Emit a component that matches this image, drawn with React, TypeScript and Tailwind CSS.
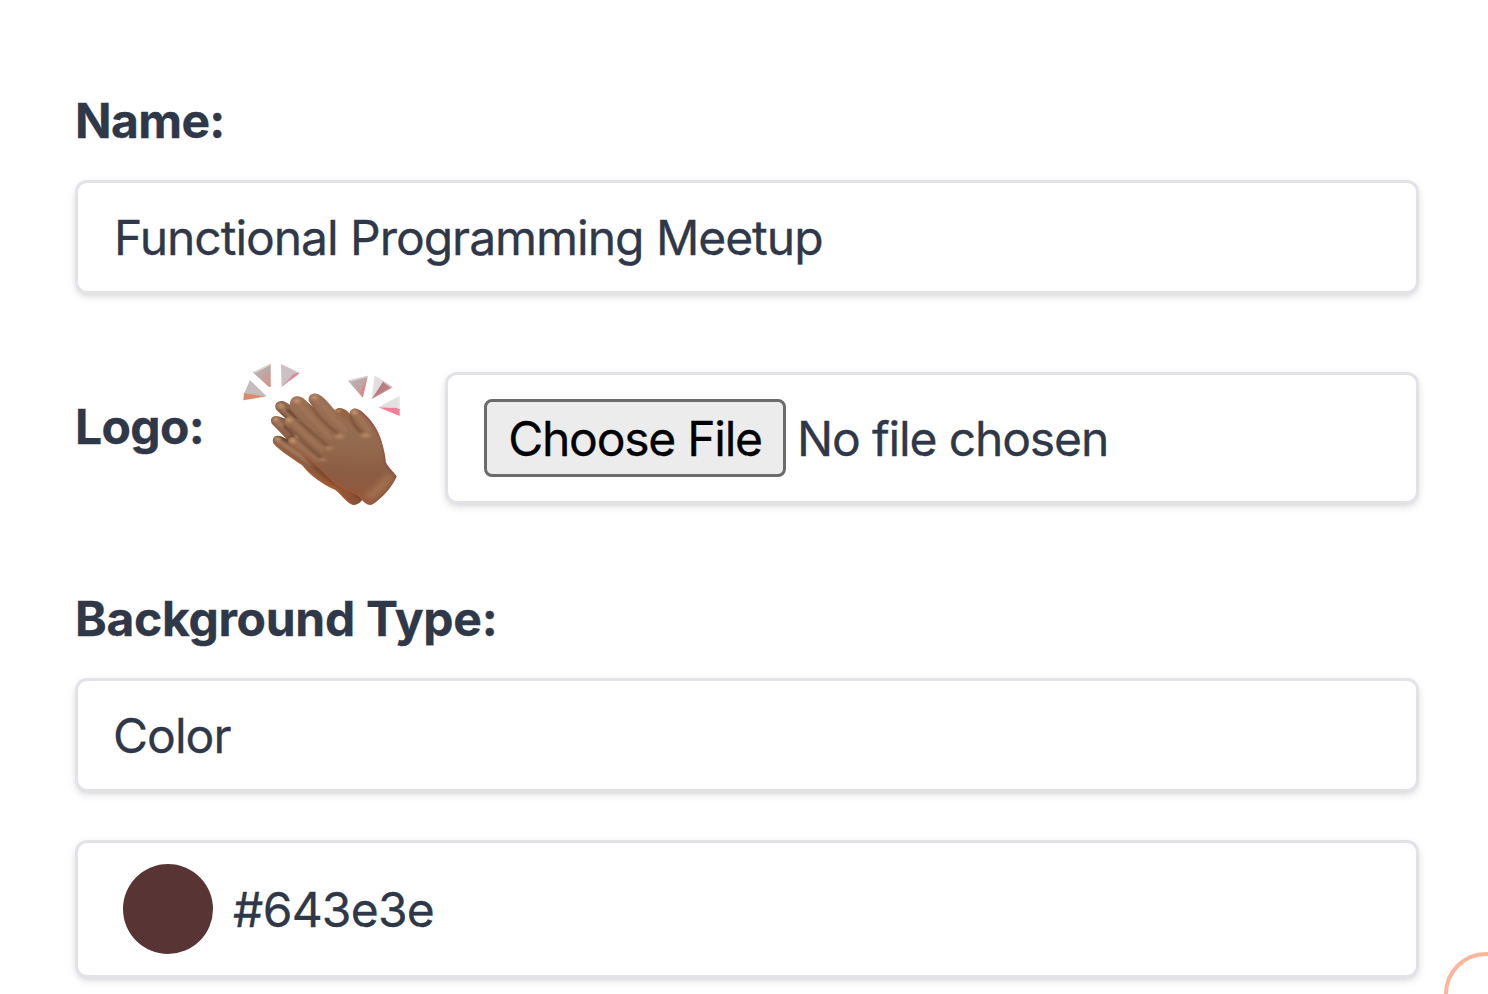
import type { ReactNode } from "react";

const field =
  "rounded-[12px] border-[3px] border-[#e2e2e8] bg-white shadow-[0_3px_9px_rgba(0,0,0,0.1),0_3px_6px_-3px_rgba(0,0,0,0.1)]";

function Label({ className = "", children }: { className?: string; children: ReactNode }) {
  return (
    <label className={`block whitespace-nowrap text-[48px] leading-[72px] font-bold ${className}`}>
      {children}
    </label>
  );
}

function ClappingHands() {
  return (
    <svg className="h-[170px] w-[190px] shrink-0" viewBox="0 0 570 510" fill="none">
      <defs>
        <linearGradient id="back" x1="140" y1="200" x2="360" y2="460" gradientUnits="userSpaceOnUse">
          <stop stopColor="#8f654c" />
          <stop offset=".5" stopColor="#8c5c40" />
          <stop offset=".8" stopColor="#9c5934" />
          <stop offset="1" stopColor="#8a5136" />
        </linearGradient>
        <linearGradient id="palm" x1="300" y1="160" x2="290" y2="420" gradientUnits="userSpaceOnUse">
          <stop stopColor="#9a6f54" />
          <stop offset=".5" stopColor="#93694d" />
          <stop offset=".8" stopColor="#8b5d43" />
          <stop offset="1" stopColor="#915a3f" />
        </linearGradient>
        <radialGradient id="tip">
          <stop stopColor="#c8976f" />
          <stop offset="1" stopColor="#b08060" stopOpacity="0" />
        </radialGradient>
        <linearGradient id="grayPink" x1="0" y1="0" x2="1" y2="1">
          <stop stopColor="#c2b8ba" />
          <stop offset=".5" stopColor="#bda8a7" />
          <stop offset="1" stopColor="#dd8d80" />
        </linearGradient>
        <linearGradient id="rose" x1="0" y1="0" x2="1" y2="1">
          <stop stopColor="#a57478" />
          <stop offset="1" stopColor="#d28b88" />
        </linearGradient>
        <filter id="soft" x="0" y="0" width="570" height="510" filterUnits="userSpaceOnUse">
          <feGaussianBlur stdDeviation="3" />
        </filter>
        <filter id="softer" x="0" y="0" width="570" height="510" filterUnits="userSpaceOnUse">
          <feGaussianBlur stdDeviation="9" />
        </filter>
        <path
          id="far-shape"
          d="M140 181C128 162 144 149 162 154L250 205L300 330L394 440L396 451C389 461 377 467 367 464C347 455 333 432 315 419C277 403 238 374 216 345C193 329 149 302 131 281C123 263 136 253 153 259L170 267L126 222C116 203 132 193 149 200L170 208Z"
        />
        <path
          id="near-shape"
          d="M236 153C233 135 249 126 265 133C286 144 300 165 317 183L361 220C362 212 358 203 359 193C358 176 375 170 389 180C421 202 445 240 455 275C463 302 466 319 467 335C474 353 489 363 500 379C487 410 460 442 428 463C422 466 413 465 407 460C395 452 388 436 370 430C334 418 302 393 273 358C250 336 198 306 178 280C168 264 182 256 197 264L232 283L168 226C157 211 169 193 187 201L215 219L190 190C184 180 179 172 180 160C182 139 203 133 220 145L250 172Z"
        />
        <clipPath id="far">
          <use href="#far-shape" />
        </clipPath>
        <clipPath id="near">
          <use href="#near-shape" />
        </clipPath>
      </defs>

      {/* Sparks around the hands */}
      <path d="M60 90L110 139L41 133Z" fill="#c3bdbf" />
      <path d="M42 130L109 139L40 151Z" fill="#d98c6c" />
      <path d="M68 67L122 41V111H117Z" fill="url(#grayPink)" />
      <path d="M68 67L122 41L121 46L76 68Z" fill="#ddd8da" />
      <path d="M153 42L207 68L155 111Z" fill="#cbc0c2" />
      <path d="M207 68L155 111L190 72Z" fill="#dc8e97" />
      <path d="M207 66L205 73L178 94L192 75Z" fill="#f27f9c" />
      <path d="M354 92L413 77L398 143Z" fill="url(#grayPink)" />
      <path d="M354 92L413 77L411 82L363 94Z" fill="#ddd6d8" />
      <path d="M413 80L398 143L391 129Z" fill="#dc868b" />
      <path d="M434 77L462 94L425 147Z" fill="#e3dedf" />
      <path d="M460 94L488 112L425 147Z" fill="url(#rose)" />
      <path d="M434 77L488 112L483 114L460 97Z" fill="#dcc6c8" />
      <path d="M445 172L508 138V174Z" fill="#e3e0e0" />
      <path d="M445 172L509 174V198Z" fill="#f07f96" />
      <path d="M503 140L509 139V177L503 176Z" fill="#ebe6e6" />

      {/* Far hand */}
      <path d="M315 180C328 168 348 176 361 193L380 245L330 230Z" fill="#946444" />
      <use href="#far-shape" fill="url(#back)" />
      <g clipPath="url(#far)">
        <path d="M154 170L200 210M140 214L200 262M146 273L250 345" stroke="#a87d60" strokeWidth="13" strokeLinecap="round" filter="url(#soft)" opacity=".8" />
        <path d="M172 180L200 204M148 192L176 212M164 230L190 255M132 248L172 272M182 262L220 300" stroke="#593728" strokeWidth="9" strokeLinecap="round" filter="url(#soft)" opacity=".75" />
        <path d="M131 285C155 310 193 329 216 348C239 378 277 405 315 422C333 437 348 459 368 467" stroke="#c9602f" strokeWidth="9" filter="url(#soft)" opacity=".7" />
        <path d="M224 310C255 361 294 389 338 408C365 418 380 430 394 449" stroke="#6b4029" strokeWidth="13" opacity=".6" filter="url(#soft)" />
        <ellipse cx="151" cy="167" rx="18" ry="13" fill="url(#tip)" />
        <ellipse cx="137" cy="208" rx="16" ry="13" fill="url(#tip)" />
        <ellipse cx="143" cy="267" rx="16" ry="12" fill="url(#tip)" />
      </g>

      {/* Near hand */}
      <use href="#near-shape" fill="url(#palm)" />
      <g clipPath="url(#near)">
        <path d="M205 160L300 262M258 147L345 240M185 214L275 298M194 276L262 330M380 190L415 240" stroke="#a67a5b" strokeWidth="15" strokeLinecap="round" filter="url(#soft)" opacity=".5" />
        <path d="M240 160C256 193 290 225 322 250M186 190C216 228 262 258 290 286M180 236C210 268 246 300 272 322" stroke="#64402e" strokeWidth="7" strokeLinecap="round" filter="url(#soft)" opacity=".55" />
        <path d="M358 190C366 219 380 236 396 248" stroke="#623e2c" strokeWidth="9" filter="url(#soft)" opacity=".55" />
        <path d="M390 178C421 202 448 240 459 275C466 302 469 319 469 335C477 353 491 363 503 379" stroke="#9b3340" strokeWidth="9" filter="url(#soft)" opacity=".75" />
        <path d="M176 284C200 310 250 336 271 360C302 395 334 420 369 433C386 439 396 456 406 463" stroke="#c8553c" strokeWidth="9" filter="url(#soft)" opacity=".6" />
        <path d="M412 443C440 425 466 398 482 376" stroke="#a57352" strokeWidth="22" filter="url(#softer)" />
        <path d="M430 466C462 444 490 410 503 379" stroke="#7a4c34" strokeWidth="8" filter="url(#soft)" opacity=".5" />
        <ellipse cx="200" cy="152" rx="20" ry="15" fill="url(#tip)" />
        <ellipse cx="253" cy="142" rx="20" ry="14" fill="url(#tip)" />
        <ellipse cx="177" cy="210" rx="18" ry="15" fill="url(#tip)" />
        <ellipse cx="188" cy="272" rx="18" ry="14" fill="url(#tip)" />
        <ellipse cx="373" cy="187" rx="17" ry="15" fill="url(#tip)" />
        <ellipse cx="329" cy="259" rx="24" ry="14" fill="url(#tip)" opacity=".7" />
        <ellipse cx="407" cy="256" rx="24" ry="13" fill="url(#tip)" opacity=".8" />
        <ellipse cx="296" cy="295" rx="21" ry="11" fill="url(#tip)" opacity=".5" />
        <ellipse cx="278" cy="329" rx="18" ry="10" fill="url(#tip)" opacity=".5" />
      </g>
      <ellipse cx="326" cy="183" rx="13" ry="9" fill="url(#tip)" opacity=".7" />
    </svg>
  );
}

export default function App() {
  return (
    <main className="relative h-[994px] w-full overflow-hidden bg-white pl-[75px] pr-[69px] pt-[85px] font-['Inter','Liberation_Sans',sans-serif] text-[48px] leading-[72px] font-normal text-[#2f3848] [-webkit-text-stroke:0.3px]">
      <Label className="tracking-[-0.013em]">Name:</Label>
      <div className={`mt-[23px] flex h-[114px] items-center px-9 pt-0.5 ${field}`}>
        <span className="tracking-[-0.0215em]">Functional Programming Meetup</span>
      </div>

      <div className="mt-14 flex h-[170px] items-start">
        <div className="w-[155px] pt-[41px]">
          <Label className="tracking-[-0.013em]">Logo:</Label>
        </div>
        <ClappingHands />
        <div className={`mt-[22px] ml-[25px] flex h-[132px] flex-1 items-center pl-9 ${field}`}>
          <button
            type="button"
            className="h-[78px] w-[302px] rounded-[8px] border-[3px] border-[#6b6b6b] bg-[#ececec] pt-0.5 text-center leading-[70px] whitespace-nowrap text-black"
          >
            <span className="tracking-[-0.026em]">Choose File</span>
          </button>
          <span className="ml-[11px] pt-0.5 tracking-[-0.024em]">No file chosen</span>
        </div>
      </div>

      <Label className="mt-[63px] tracking-[-0.006em]">Background Type:</Label>
      <div className={`mt-[23px] flex h-[114px] items-center px-[35px] pt-0.5 ${field}`}>
        <span className="tracking-[-0.02em]">Color</span>
      </div>

      <div className={`mt-12 flex h-[138px] items-center px-[45px] ${field}`}>
        <span className="size-[90px] rounded-full bg-[#583434]" />
        <span className="ml-5 pt-0.5 tracking-[-0.016em]">#643e3e</span>
      </div>

      <div className="absolute top-[952px] left-[1444px] size-[84px] rounded-full border-[4px] border-[#ffb59b]" />
    </main>
  );
}
